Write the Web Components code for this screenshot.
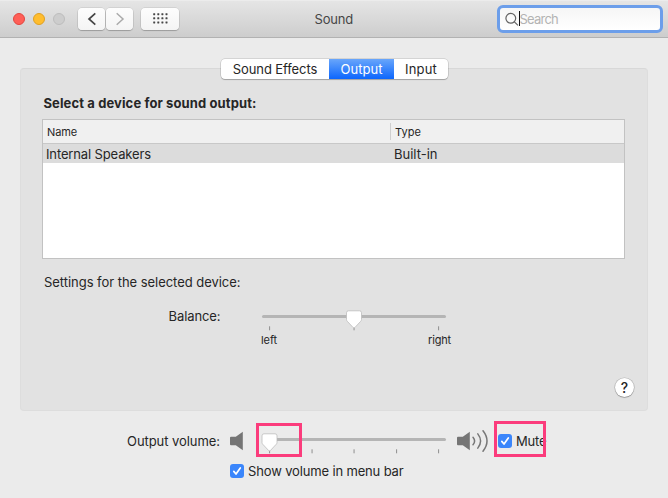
<!DOCTYPE html>
<html lang="en">
<head>
<meta charset="utf-8">
<title>Sound</title>
<style>
html, body { margin: 0; height: 100%; overflow: hidden; background: #ebebeb; }
body { font-family: Inter, "Liberation Sans", sans-serif; color: #262626; }
</style>
</head>
<body>
<sound-window></sound-window>
<script>
class BaseElement extends HTMLElement {
  constructor() { super(); this.attachShadow({ mode: 'open' }); }
  connectedCallback() {
    this.shadowRoot.innerHTML = `<style>:host{box-sizing:border-box}*{box-sizing:border-box}${this.css()}</style>${this.html()}`;
    this.ready();
  }
  css() { return ''; }
  html() { return '<slot></slot>'; }
  ready() {}
}

// A one-line label whose tracking is adjusted to its "w" width.
customElements.define('mac-text', class extends BaseElement {
  css() {
    const s = +this.getAttribute('size') || 13;
    return `:host{display:block;flex:none;white-space:nowrap;font-size:${s}px;line-height:${s > 12 ? 16 : 14}px;width:${this.getAttribute('w')}px}
      span{display:inline-block}`;
  }
  html() { return '<span><slot></slot></span>'; }
  ready() {
    const span = this.shadowRoot.querySelector('span');
    const n = this.textContent.length;
    const gap = (+this.getAttribute('w') - span.getBoundingClientRect().width) / n;
    span.style.letterSpacing = gap.toFixed(3) + 'px';
  }
});

customElements.define('tool-button', class extends BaseElement {
  css() {
    return `:host{display:flex;align-items:center;justify-content:center;width:27px;height:22px;border-radius:4px;
      background:linear-gradient(#fdfdfd,#f4f4f4);box-shadow:0 0 0 .5px #0002,0 1px 1px #0003}
      :host([wide]){width:38px}`;
  }
});

customElements.define('traffic-lights', class extends BaseElement {
  css() {
    return `:host{display:flex;gap:8px}i{width:12px;height:12px;border-radius:50%;border:.5px solid #0002}
      i:nth-of-type(1){background:#ff5f57;border-color:#e2463f}i:nth-of-type(2){background:#ffbd2e;border-color:#dfa023}
      i:nth-of-type(3){background:#cdcdcd;border:1px solid #bdbdbd}`;
  }
  html() { return '<i></i><i></i><i></i>'; }
});

customElements.define('search-field', class extends BaseElement {
  css() {
    return `:host{display:flex;align-items:center;width:166px;height:28px;border:3px solid #6c9eea;border-radius:6px;
      background:linear-gradient(#f6f6f6,#fff);padding-left:5px;color:#b3b3b3}
      svg{flex:none}i{width:1px;height:15px;background:#111;flex:none;margin:-1px 0 0 0}`;
  }
  html() {
    return `<svg width="14" height="14" viewBox="0 0 14 14" fill="none" stroke="#636363" stroke-width="1.2"><circle cx="5.8" cy="6.3" r="4.9"/><path d="M9.4 9.9L13 13.4"/></svg><i></i><slot></slot>`;
  }
});

customElements.define('title-bar', class extends BaseElement {
  css() {
    return `:host{display:grid;grid-template-columns:314.5px 1fr 171.5px;align-items:center;height:38px;padding-bottom:0;
      background:linear-gradient(#f3f3f3 0,#e5e5e5 1px,#cdcdcd 37px);border-bottom:1px solid #b2b2b2;color:#464646}
      .left{display:flex;align-items:center;padding-left:13px}.nav{display:flex;gap:1px;margin:0 8px 0 13px}`;
  }
  html() {
    return `<div class="left"><traffic-lights></traffic-lights>
      <div class="nav"><tool-button><svg width="10" height="14" viewBox="0 0 10 14" fill="none" stroke="#454545" stroke-width="1.7"><path d="M8.3 1.3L2 7L8.3 12.7"/></svg></tool-button>
      <tool-button><svg width="10" height="14" viewBox="0 0 10 14" fill="none" stroke="#aaa" stroke-width="1.5"><path d="M1.7 1.3L8 7L1.7 12.7"/></svg></tool-button></div>
      <tool-button wide><svg width="15" height="11" viewBox="0 0 15 11" fill="#474747">${[0, 4.1, 8.2].map(y => [0, 4.1, 8.2, 12.3].map(x => `<rect x="${x + .2}" y="${y + .2}" width="2" height="2" rx=".4"/>`).join('')).join('')}</svg></tool-button></div>
      <mac-text w="38.5">Sound</mac-text>
      <search-field><mac-text w="38.5">Search</mac-text></search-field>`;
  }
});

customElements.define('tab-bar', class extends BaseElement {
  css() {
    return `:host{display:flex;width:227px;height:20px;border-radius:4px;background:#fff;overflow:hidden;box-shadow:0 0 0 .5px #0003,0 1px 1px #0003}
      div{display:flex;align-items:center;justify-content:center}.a{width:108px}.b{width:65px;color:#fff;background:linear-gradient(#69a6fb,#0c66fd)}.c{width:54px}`;
  }
  html() {
    return `<div class="a"><mac-text w="84.5">Sound Effects</mac-text></div><div class="b"><mac-text w="42">Output</mac-text></div><div class="c"><mac-text w="32">Input</mac-text></div>`;
  }
});

customElements.define('device-table', class extends BaseElement {
  css() {
    return `:host{display:block;width:583px;height:140px;background:#fff;border:1px solid #c2c2c2}
      .row{display:grid;grid-template-columns:347px 1fr}
      .head{height:24px;background:#f0f0f0;border-bottom:1px solid #c8c8c8;align-items:center}
      .head mac-text{margin-left:4px}.head div{height:17px;border-left:1px solid #cfcfcf;display:flex;align-items:center}
      .item{height:19px;background:#dcdcdc;align-items:center}.item mac-text{margin-left:3px}.item mac-text+mac-text{margin-left:4px}`;
  }
  html() {
    return `<div class="row head"><mac-text size="11" w="30">Name</mac-text><div><mac-text size="11" w="26">Type</mac-text></div></div>
      <div class="row item"><mac-text w="105">Internal Speakers</mac-text><mac-text w="43.5">Built-in</mac-text></div>`;
  }
});

// Slider with tick marks: "at" is the thumb centre, "ticks" the mark centres.
customElements.define('mac-slider', class extends BaseElement {
  css() { return ':host{display:block;width:186px;height:22px}svg{display:block}'; }
  html() {
    const at = +this.getAttribute('at');
    const ticks = this.getAttribute('ticks').split(' ').map(x => `<rect x="${x - .5}" y="16.3" width="1.1" height="4" fill="#979797"/>`).join('');
    return `<svg width="186" height="22"><rect x="1" y="5" width="184" height="3" rx="1.5" fill="#b5b5b5"/>${ticks}
      <g transform="translate(${at} 0)"><path d="M-5.5 .8H5.5Q7.5 .8 7.5 2.8V9.6Q7.5 10.4 6.8 11.2L.9 17.5Q0 18.3-.9 17.5L-6.8 11.2Q-7.5 10.4-7.5 9.6V2.8Q-7.5 .8-5.5 .8Z" fill="#fff" stroke="#bdbdbd" stroke-width=".8"/></g></svg>`;
  }
});

customElements.define('check-box', class extends BaseElement {
  css() { return ':host{display:flex;align-items:center;gap:4px;height:16px}svg{flex:none}'; }
  html() {
    return `<svg width="14" height="14" viewBox="0 0 14 14"><rect width="14" height="14" rx="3" fill="#3b86fb"/><path d="M3.8 7.4L6 10L10.3 3.9" fill="none" stroke="#fff" stroke-width="1.7" stroke-linecap="round" stroke-linejoin="round"/></svg><slot></slot>`;
  }
});

customElements.define('speaker-icon', class extends BaseElement {
  css() { return ':host{display:block}svg{display:block}'; }
  html() {
    const loud = this.hasAttribute('loud');
    const waves = loud ? `<g fill="none" stroke="#777" stroke-width="1.5" stroke-linecap="round"><path d="M16 8.2Q19.2 12 16 15.8" /><path d="M20.8 4.9Q26.4 12 20.8 19.1"/><path d="M26 1.8Q34 12 26 22.2"/></g>` : '';
    return `<svg width="${loud ? 33 : 14}" height="24" viewBox="0 0 ${loud ? 33 : 14} 24"><path d="M1 7.8H5.8L12.8 2.8V21.2L5.8 16.2H1Q0 16.2 0 15.2V8.8Q0 7.8 1 7.8Z" fill="#757575"/>${waves}</svg>`;
  }
});

customElements.define('help-button', class extends BaseElement {
  css() { return ':host{display:flex;align-items:center;justify-content:center;width:19px;height:19px;border-radius:50%;background:#fff;box-shadow:0 0 0 .6px #0003,0 1px 1px #0003;font:500 14px/19px Inter,"Liberation Sans",sans-serif}'; }
});

customElements.define('output-panel', class extends BaseElement {
  css() {
    return `:host{display:flex;flex-direction:column;width:628px;height:343px;margin:30px 0 0 20px;border:1px solid #dddddd;border-top-color:#d8d8d8;border-radius:4px;background:#e2e2e2;padding:0 13px 0 21px}
      tab-bar{margin:-10px 0 0 179px}
      .title{font-weight:700;margin:16px 0 0 1.5px}device-table{margin-top:8px}.sub{margin:15px 0 0 2px}
      .balance{display:flex;margin:18px 0 0 126.5px;gap:40.5px}.balance mac-slider{margin-top:2px}
      .ends{display:flex;justify-content:space-between;width:190px;margin:1px 0 0 219px}
      help-button{margin:31px 0 0 auto}`;
  }
  html() {
    return `<tab-bar></tab-bar><mac-text class="title" w="213">Select a device for sound output:</mac-text>
      <device-table></device-table><mac-text class="sub" w="196.5">Settings for the selected device:</mac-text>
      <div class="balance"><mac-text w="52">Balance:</mac-text><mac-slider at="93" ticks="8.5 93 177.5"></mac-slider></div>
      <div class="ends"><mac-text size="11" w="16">left</mac-text><mac-text size="11" w="23">right</mac-text></div>
      <help-button>?</help-button>`;
  }
});

customElements.define('volume-bar', class extends BaseElement {
  css() {
    return `:host{display:block;padding:18px 0 0 127px}.line{display:flex;height:24px;align-items:center}
      .line>mac-text{margin-right:10px}.line>mac-slider{margin:5px 10px 0 17px}
      .line>check-box{margin:0 0 0 8px}.menu{margin:10px 0 0 103px}
      .mark{position:absolute;border:3px solid #fb3c7c}.one{left:256px;top:423px;width:46px;height:34px}.two{left:494px;top:421px;width:52px;height:36px}`;
  }
  html() {
    return `<div class="line"><mac-text w="93">Output volume:</mac-text><speaker-icon></speaker-icon>
      <mac-slider at="8.5" ticks="8.5 51 93 135.5 177.5"></mac-slider><speaker-icon loud></speaker-icon>
      <check-box><mac-text w="30.5">Mute</mac-text></check-box></div>
      <check-box class="menu"><mac-text w="155.5">Show volume in menu bar</mac-text></check-box>
      <div class="mark one"></div><div class="mark two"></div>`;
  }
});

customElements.define('sound-window', class extends BaseElement {
  css() { return ':host{display:flex;flex-direction:column;width:668px;height:498px;background:#ebebeb}'; }
  html() { return '<title-bar></title-bar><output-panel></output-panel><volume-bar></volume-bar>'; }
});
</script>
</body>
</html>
